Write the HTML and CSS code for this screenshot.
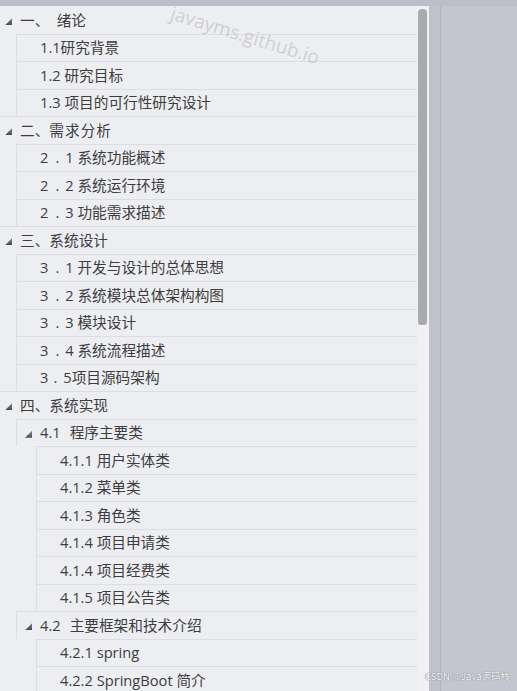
FILE: index.html
```html
<!DOCTYPE html>
<html lang="zh-CN">
<head>
<meta charset="utf-8">
<title>目录</title>
<link rel="stylesheet" href="styles.css">
</head>
<body>
<div class="topbar"></div>
<div class="main">
  <div class="panel">
    <div class="tree">
      <div class="row lv0"><span class="tri"></span><span class="txt">一、&ensp;绪论</span></div>
      <div class="row lv1"><span class="txt">1.1研究背景</span></div>
      <div class="row lv1"><span class="txt">1.2 研究目标</span></div>
      <div class="row lv1"><span class="txt">1.3 项目的可行性研究设计</span></div>
      <div class="row lv0"><span class="tri"></span><span class="txt">二、<span class="wide">需求分析</span></span></div>
      <div class="row lv1"><span class="txt">2<span class="dot">.</span>1 系统功能概述</span></div>
      <div class="row lv1"><span class="txt">2<span class="dot">.</span>2 系统运行环境</span></div>
      <div class="row lv1"><span class="txt">2<span class="dot">.</span>3 功能需求描述</span></div>
      <div class="row lv0"><span class="tri"></span><span class="txt">三、系统设计</span></div>
      <div class="row lv1"><span class="txt">3<span class="dot">.</span>1 开发与设计的总体思想</span></div>
      <div class="row lv1"><span class="txt">3<span class="dot">.</span>2 系统模块总体架构构图</span></div>
      <div class="row lv1"><span class="txt">3<span class="dot">.</span>3 模块设计</span></div>
      <div class="row lv1"><span class="txt">3<span class="dot">.</span>4 系统流程描述</span></div>
      <div class="row lv1"><span class="txt">3<span class="dot tight">.</span>5项目源码架构</span></div>
      <div class="row lv0"><span class="tri"></span><span class="txt">四、系统实现</span></div>
      <div class="row lv1 group"><span class="tri"></span><span class="txt"><span class="num">4.1</span>程序主要类</span></div>
      <div class="row lv2"><span class="txt">4.1.1 用户实体类</span></div>
      <div class="row lv2"><span class="txt">4.1.2 菜单类</span></div>
      <div class="row lv2"><span class="txt">4.1.3 角色类</span></div>
      <div class="row lv2"><span class="txt">4.1.4 项目申请类</span></div>
      <div class="row lv2"><span class="txt">4.1.4 项目经费类</span></div>
      <div class="row lv2"><span class="txt">4.1.5 项目公告类</span></div>
      <div class="row lv1 group"><span class="tri"></span><span class="txt"><span class="num">4.2</span>主要框架和技术介绍</span></div>
      <div class="row lv2"><span class="txt">4.2.1 spring</span></div>
      <div class="row lv2"><span class="txt">4.2.2 SpringBoot 简介</span></div>
    </div>
    <div class="scroll"><div class="thumb"></div></div>
  </div>
  <div class="gutter"></div>
  <div class="side"></div>
</div>
<div class="mark">javayms.github.io</div>
<div class="credit">CSDN @Java源码栈</div>
</body>
</html>
```
FILE: styles.css
```css
html, body {
  margin: 0;
  padding: 0;
}

body {
  width: 517px;
  height: 691px;
  overflow: hidden;
  position: relative;
  background: #c3c6cf;
  font-family: "Open Sans", "Noto Sans CJK SC", sans-serif;
}

.topbar {
  height: 6px;
  background: #bcbfca;
}

.main {
  display: flex;
  height: 685px;
}

.panel {
  width: 429px;
  display: flex;
  background: #edeef1;
}

.tree {
  width: 417px;
  overflow: hidden;
}

.row {
  box-sizing: border-box;
  height: 27.5px;
  display: flex;
  align-items: center;
  border-top: 1px solid #dcdde1;
  font-size: 14.67px;
  color: #3d3d3d;
  white-space: nowrap;
}

.row:first-child {
  border-top-color: transparent;
}

.lv0 {
  padding-left: 5px;
}

.lv1 {
  margin-left: 16px;
  border-left: 1px solid #dcdde1;
  padding-left: 23px;
}

.lv1.group {
  padding-left: 8px;
}

.lv2 {
  margin-left: 36px;
  border-left: 1px solid #dcdde1;
  padding-left: 23px;
}

/* expanded-node arrow */
.tri {
  width: 7px;
  height: 7px;
  margin-right: 8px;
  margin-top: 3px;
  background: linear-gradient(180deg, #80858f, #464b56);
  clip-path: polygon(100% 0, 100% 100%, 0 100%);
  flex: none;
}

.txt {
  line-height: 1;
}

/* spaced-out section numbers such as "2 . 1" */
.dot {
  margin: 0 6px 0 7px;
}

.dot.tight {
  margin: 0 6px 0 5px;
}

.num {
  display: inline-block;
  margin-right: 9px;
}

.wide {
  letter-spacing: 1px;
}

.scroll {
  width: 12px;
  padding-top: 3px;
  background: #f1f1f3;
}

.thumb {
  width: 9px;
  height: 316px;
  margin-left: 1px;
  background: #a9aaae;
  border-radius: 4px 4px 3px 3px;
}

.gutter {
  width: 11px;
  background: #bfc2cb;
}

.side {
  flex: 1;
  border-left: 1px solid #b0b3bc;
  background: #c3c6cf;
}

.mark {
  position: absolute;
  left: 175px;
  top: 0;
  font-family: "Open Sans", sans-serif;
  font-size: 19px;
  color: rgba(175, 177, 183, 0.5);
  transform: rotate(17deg);
  transform-origin: left top;
  white-space: nowrap;
}

.credit {
  position: absolute;
  right: 7px;
  bottom: 8px;
  font-family: "Noto Sans CJK SC", sans-serif;
  font-size: 9.5px;
  color: #f6f6f8;
  text-shadow: 0 0 1px #7f828a, 0 0 1px #7f828a;
  white-space: nowrap;
}
```
